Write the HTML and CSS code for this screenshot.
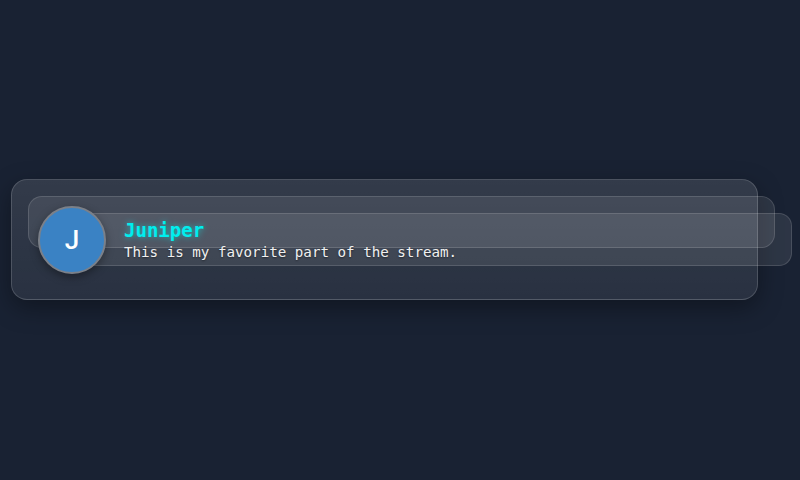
FILE: index.html
```html
<!DOCTYPE html>
<html>
<head>
<meta charset="utf-8">
<link rel="stylesheet" href="styles.css">
</head>
<body>
<div class="stage">
  <div class="message">
    <div class="ghost ghost-1"></div>
    <div class="ghost ghost-2"></div>
    <div class="avatar">J</div>
    <div class="body">
      <div class="name">Juniper</div>
      <div class="text">This is my favorite part of the stream.</div>
    </div>
  </div>
</div>
</body>
</html>
```
FILE: styles.css
```css
html, body {
  margin: 0;
  height: 100%;
}
body {
  background: #192233;
  font-family: "DejaVu Sans Mono", monospace;
  overflow: hidden;
}
.stage {
  height: 480px;
  display: flex;
  align-items: center;
  padding-left: 11px;
  padding-bottom: 1px;
  box-sizing: border-box;
}
.message {
  position: relative;
  width: 747px;
  height: 121px;
  box-sizing: border-box;
  border: 1px solid rgba(255, 255, 255, 0.16);
  border-radius: 16px;
  background: linear-gradient(to bottom, rgba(255, 255, 255, 0.115), rgba(255, 255, 255, 0.07));
  box-shadow: 0 8px 24px rgba(0, 0, 0, 0.35);
  display: flex;
  align-items: center;
  padding-left: 26px;
  gap: 18px;
}
.ghost {
  position: absolute;
  width: 747px;
  box-sizing: border-box;
  border: 1px solid rgba(255, 255, 255, 0.13);
  border-radius: 14px;
  background: rgba(255, 255, 255, 0.09);
  z-index: 0;
}
.ghost-1 {
  left: 16px;
  top: 16px;
  height: 52px;
}
.ghost-2 {
  left: 33px;
  top: 33px;
  height: 53px;
  border-radius: 13px;
}
.avatar {
  position: relative;
  z-index: 1;
  width: 68px;
  height: 68px;
  box-sizing: border-box;
  border-radius: 50%;
  background: #3a82c4;
  border: 2px solid #7b8089;
  box-shadow: 0 3px 8px rgba(0, 0, 0, 0.35);
  color: #ffffff;
  font-family: Roboto, "Liberation Sans", sans-serif;
  font-weight: 500;
  font-size: 26px;
  display: flex;
  align-items: center;
  justify-content: center;
  flex-shrink: 0;
}
.body {
  position: relative;
  z-index: 1;
  display: flex;
  flex-direction: column;
  margin-top: 0;
}
.name {
  color: #00eeee;
  font-weight: bold;
  font-size: 19px;
  line-height: 22px;
  text-shadow: 0 0 6px rgba(0, 255, 255, 0.55);
}
.text {
  margin-top: 2px;
  color: #f0f0f0;
  font-size: 14.2px;
  line-height: 18px;
  text-shadow: 0 1px 2px rgba(0, 0, 0, 0.45);
}
```
